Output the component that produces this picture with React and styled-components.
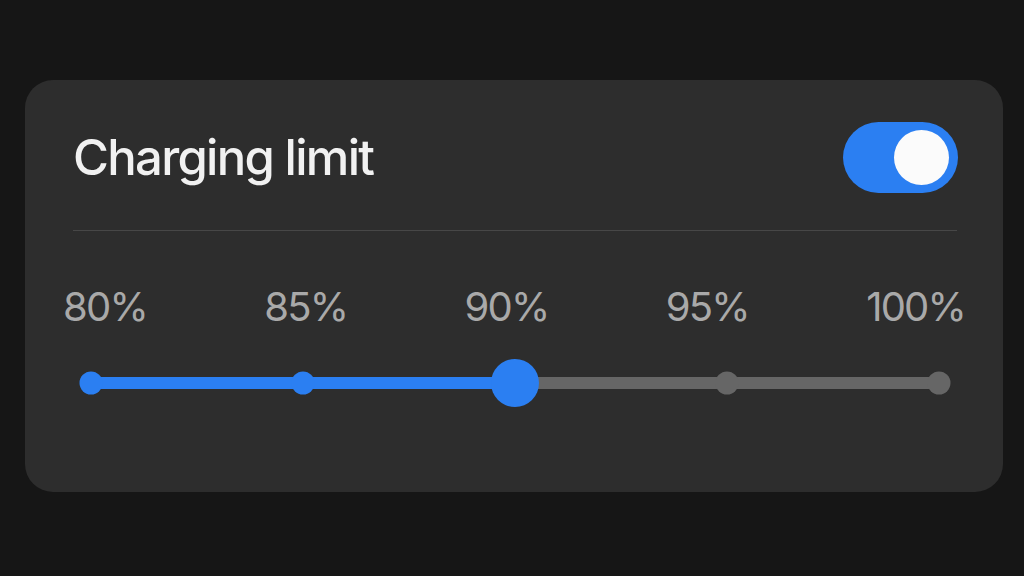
import React, { useState } from 'react';
import styled, { createGlobalStyle } from 'styled-components';

const GlobalStyle = createGlobalStyle`
  html, body {
    margin: 0;
    padding: 0;
    background: #161616;
  }
  body {
    font-family: Inter, 'Noto Sans', sans-serif;
  }
`;

const Page = styled.div`
  width: 1024px;
  height: 576px;
  padding: 80px 21px 0 25px;
  box-sizing: border-box;
`;

const Card = styled.section`
  height: 412px;
  background: #2d2d2d;
  border-radius: 28px;
  display: flex;
  flex-direction: column;
`;

const Header = styled.div`
  display: flex;
  align-items: center;
  justify-content: space-between;
  height: 71px;
  padding: 42px 45px 0 48px;
`;

const Title = styled.h2`
  margin: 0;
  font-size: 49px;
  font-weight: 500;
  letter-spacing: -1.7px;
  color: #f1f1f1;
`;

const Toggle = styled.button`
  width: 115px;
  height: 71px;
  padding: 0 9px;
  border: none;
  border-radius: 36px;
  background: ${p => (p.on ? '#2b7ff2' : '#5a5a5a')};
  display: flex;
  align-items: center;
  justify-content: ${p => (p.on ? 'flex-end' : 'flex-start')};
  cursor: pointer;
`;

const Knob = styled.span`
  width: 55px;
  height: 55px;
  border-radius: 50%;
  background: #fbfbfb;
`;

const Divider = styled.hr`
  margin: 37px 46px 0 48px;
  border: none;
  height: 1px;
  background: #474747;
`;

const Labels = styled.div`
  display: flex;
  justify-content: space-between;
  padding: 0 38px 0 38px;
  margin-top: 56px;
`;

const Label = styled.span`
  font-size: 40px;
  line-height: 40px;
  color: #a9a9a9;
  letter-spacing: -1.8px;
`;

const SliderRow = styled.div`
  margin: 32px 64px 0 66px;
  height: 48px;
  position: relative;
  display: flex;
  align-items: center;
`;

const Track = styled.div`
  flex: 1;
  height: 12px;
  border-radius: 6px;
  background: #666666;
  position: relative;
`;

const Fill = styled.div`
  height: 100%;
  border-radius: 6px;
  background: #2b7ff2;
`;

const Stop = styled.span`
  position: absolute;
  top: 50%;
  width: ${p => (p.thumb ? 48 : 23)}px;
  height: ${p => (p.thumb ? 48 : 23)}px;
  border-radius: 50%;
  background: ${p => (p.active ? '#2b7ff2' : '#666666')};
  transform: translate(-50%, -50%);
  cursor: pointer;
`;

const steps = [80, 85, 90, 95, 100];

export default function App() {
  const [on, setOn] = useState(true);
  const [value, setValue] = useState(2);
  const pct = (value / (steps.length - 1)) * 100;

  return (
    <>
      <GlobalStyle />
      <Page>
        <Card>
          <Header>
            <Title>Charging limit</Title>
            <Toggle on={on} onClick={() => setOn(!on)} aria-label="Charging limit">
              <Knob />
            </Toggle>
          </Header>
          <Divider />
          <Labels>
            {steps.map(s => (
              <Label key={s}>{s}%</Label>
            ))}
          </Labels>
          <SliderRow>
            <Track>
              <Fill style={{ width: pct + '%' }} />
              {steps.map((s, i) => (
                <Stop
                  key={s}
                  active={i <= value}
                  thumb={i === value}
                  style={{ left: (i / (steps.length - 1)) * 100 + '%' }}
                  onClick={() => setValue(i)}
                />
              ))}
            </Track>
          </SliderRow>
        </Card>
      </Page>
    </>
  );
}
